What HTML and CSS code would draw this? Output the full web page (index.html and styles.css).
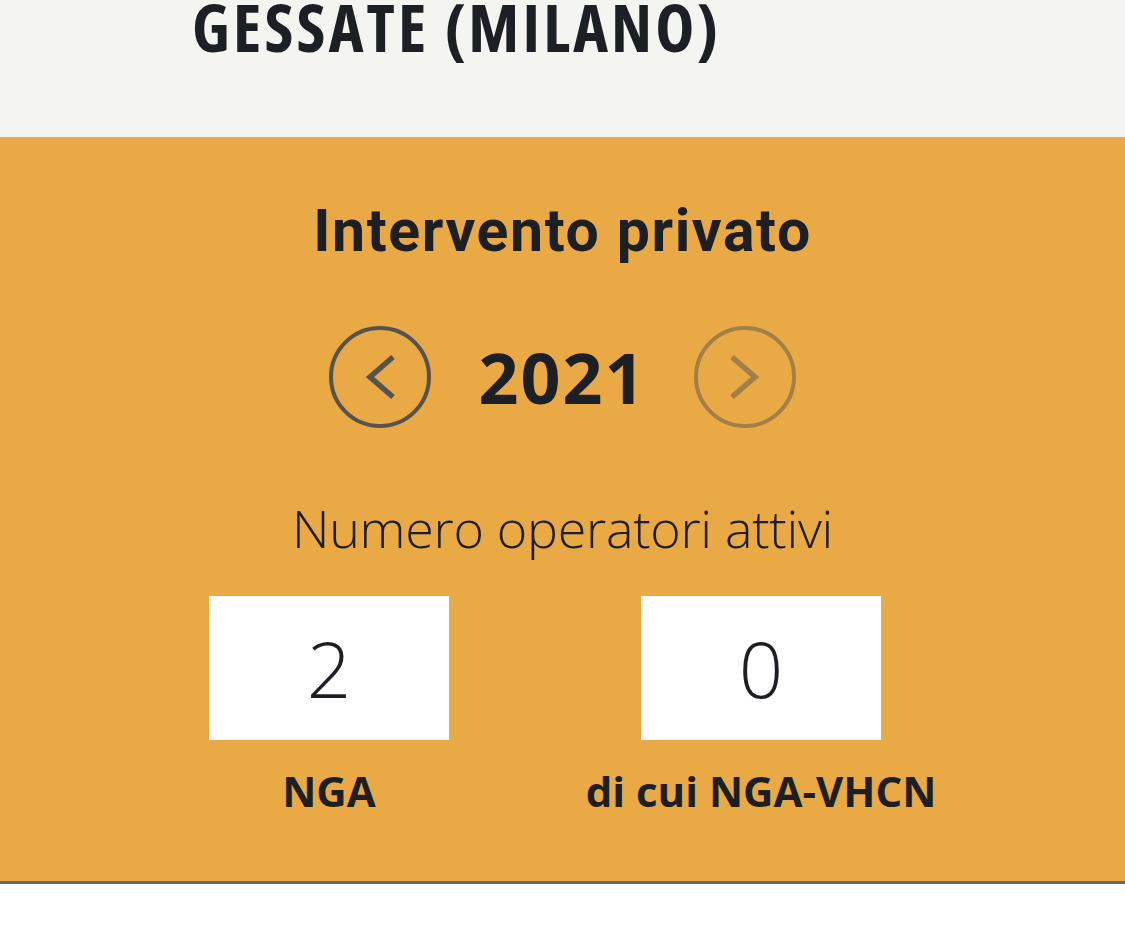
FILE: index.html
```html
<!DOCTYPE html>
<html lang="it">
<head>
<meta charset="utf-8">
<title>Gessate (Milano)</title>
<link rel="stylesheet" href="styles.css">
</head>
<body>
<header class="head">
  <h1 class="city">GESSATE (MILANO)</h1>
</header>
<section class="panel">
  <h2 class="panel-title">Intervento privato</h2>
  <div class="year-nav">
    <button class="nav-btn" aria-label="Anno precedente">
      <svg viewBox="0 0 102 102" width="102" height="102">
        <circle cx="51" cy="51" r="49" fill="none" stroke="currentColor" stroke-width="4"/>
        <polyline points="64,31 41,51 64,71" fill="none" stroke="currentColor" stroke-width="5.5"/>
      </svg>
    </button>
    <span class="year">2021</span>
    <button class="nav-btn disabled" aria-label="Anno successivo">
      <svg viewBox="0 0 102 102" width="102" height="102">
        <circle cx="51" cy="51" r="49" fill="none" stroke="currentColor" stroke-width="4"/>
        <polyline points="38,31 61,51 38,71" fill="none" stroke="currentColor" stroke-width="5.5"/>
      </svg>
    </button>
  </div>
  <p class="subtitle">Numero operatori attivi</p>
  <div class="stats">
    <div class="stat">
      <div class="stat-box">2</div>
      <div class="stat-label">NGA</div>
    </div>
    <div class="stat">
      <div class="stat-box">0</div>
      <div class="stat-label">di cui NGA-VHCN</div>
    </div>
  </div>
</section>
<div class="after"></div>
</body>
</html>
```
FILE: styles.css
```css
html, body {
  margin: 0;
  padding: 0;
  background: #ffffff;
}
body {
  font-family: "Open Sans", "Noto Sans", sans-serif;
  color: #1c1f23;
}
.head {
  background: #f4f4f0;
  height: 137px;
  padding-left: 192px;
  box-sizing: border-box;
}
.city {
  margin: 0;
  font-size: 66px;
  line-height: 52px;
  font-weight: 700;
  font-stretch: 75%;
  letter-spacing: 3.2px;
  white-space: nowrap;
}
.panel {
  background: #e9a944;
  border-bottom: 3px solid #5f666d;
  padding: 59px 0 0;
  height: 685px;
  box-sizing: content-box;
  text-align: center;
}
.panel-title {
  margin: 0;
  font-family: Roboto, "Open Sans", sans-serif;
  font-size: 59px;
  line-height: 70px;
  font-weight: 700;
  letter-spacing: 1.6px;
}
.year-nav {
  margin-top: 60px;
  display: flex;
  justify-content: center;
  align-items: center;
  gap: 47px;
  height: 102px;
}
.nav-btn {
  border: 0;
  padding: 0;
  margin: 0;
  background: none;
  width: 102px;
  height: 102px;
  color: #555350;
  display: block;
}
.nav-btn svg {
  display: block;
}
.nav-btn.disabled {
  opacity: 0.48;
}
.year {
  font-size: 70px;
  line-height: 102px;
  font-weight: 700;
  letter-spacing: 2px;
}
.subtitle {
  margin: 69px 0 0;
  font-size: 52px;
  line-height: 62px;
  font-weight: 300;
  font-stretch: 97%;
  letter-spacing: -0.3px;
}
.stats {
  margin: 37px 0 0 113px;
  width: 864px;
  display: grid;
  grid-template-columns: 1fr 1fr;
}
.stat {
  display: flex;
  flex-direction: column;
  align-items: center;
}
.stat-box {
  background: #ffffff;
  width: 240px;
  height: 144px;
  line-height: 144px;
  font-size: 78px;
  font-weight: 300;
}
.stat-label {
  margin-top: 26px;
  font-size: 42px;
  line-height: 50px;
  font-weight: 700;
  white-space: nowrap;
}
.after {
  height: 40px;
  background: #ffffff;
}
```
